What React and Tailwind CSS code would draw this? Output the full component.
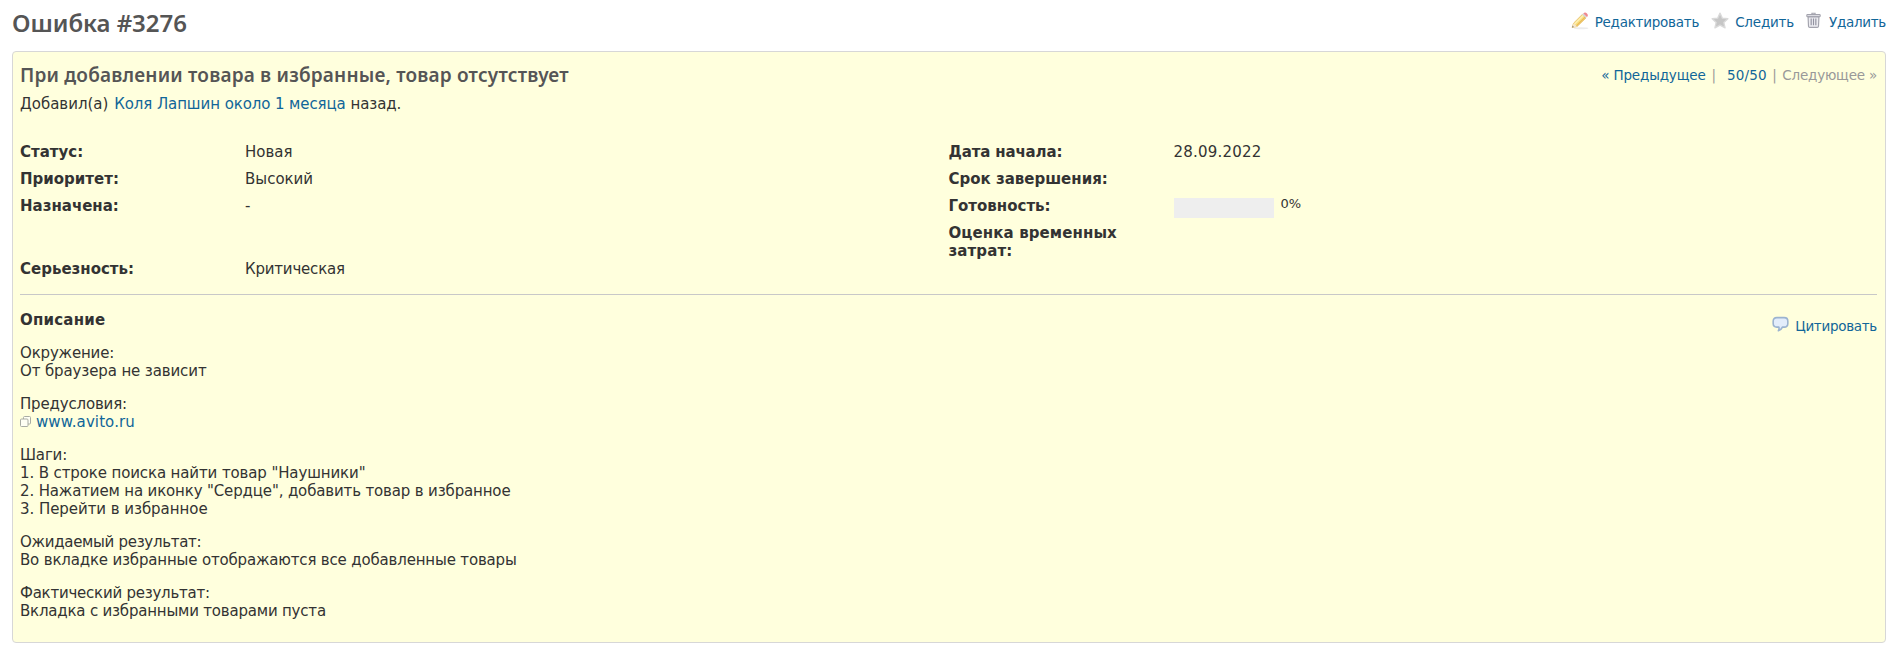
import React from "react";

function Pencil() {
  return (
    <svg width="18" height="18" viewBox="0 0 16 16" className="shrink-0">
      <ellipse cx="9" cy="14.4" rx="6.5" ry="0.9" fill="#ececec" />
      <path d="M1 13.800 2.300 9.900 10 2.200 13.300 5.300 5.400 12.900Z" fill="#f9dc7c" stroke="#e3b860" strokeWidth="0.7" />
      <path d="M3.200 10.700 11 3" stroke="#fdf0b4" strokeWidth="1.3" />
      <path d="M4.800 12.300 12.600 4.600" stroke="#e8b855" strokeWidth="0.9" />
      <path d="M10 2.200 13.300 5.300 14.200 4.300 11 1.200Z" fill="#d3d8dc" />
      <path d="M11 1.300c.9-1.200 2.100-1.100 3.200 0s1.100 2.200 0 3.200Z" fill="#ef8a90" />
      <path d="M1 13.800 2.300 9.900 5.400 12.900Z" fill="#f4e6cf" />
      <path d="M1 13.800 1.500 12.300 2.500 13.300Z" fill="#6b6b6b" />
    </svg>
  );
}

function Star() {
  return (
    <svg width="18" height="18" viewBox="0 0 16 16" className="shrink-0">
      <path
        d="M8 1 10.100 5.500 15 6 11.400 9.300 12.500 14.100 8 11.600 3.500 14.100 4.600 9.300 1 6 5.900 5.500Z"
        fill="#c6c6c6"
        stroke="#dadada"
        strokeWidth="1.2"
        strokeLinejoin="round"
      />
    </svg>
  );
}

function Trash() {
  return (
    <svg width="17" height="17" viewBox="0 0 16 16" fill="none" stroke="#a3a3ad" className="shrink-0">
      <path d="M6.500 2.200V1.100h3v1.100" strokeWidth="1" />
      <rect x="1.700" y="2.400" width="12.600" height="2.100" rx="0.700" fill="#dcdce2" strokeWidth="1" />
      <path d="M2.900 4.600 3.300 13.400q.1 1.100 1.200 1.100h7q1.100 0 1.200-1.100L13.100 4.600Z" fill="#ededf2" strokeWidth="1.100" />
      <path d="M5.800 6v6.500M8 6v6.500M10.200 6v6.500" strokeWidth="1.100" stroke="#9292a0" />
    </svg>
  );
}

function Bubble() {
  return (
    <svg width="17" height="17" viewBox="0 0 16 16" className="shrink-0">
      <path
        d="M4.500 1.500h7q3.400 0 3.400 3.400v2.200q0 3.400-3.400 3.400H9.800Q8.800 13 6 13.800 7 12 6.500 10.500h-2q-3.400 0-3.400-3.400V4.900q0-3.400 3.400-3.400Z"
        fill="#e3edfb"
        stroke="#9bb3d0"
        strokeWidth="1.500"
        strokeLinejoin="round"
      />
    </svg>
  );
}

function External() {
  return (
    <svg width="12" height="12" viewBox="0 0 12 12" fill="#fffff4" stroke="#a9aca4" className="shrink-0">
      <rect x="3.500" y="0.500" width="7" height="7.500" rx="1" />
      <rect x="0.500" y="3" width="7.500" height="7.500" rx="1" />
    </svg>
  );
}

function Action({ icon, children, className = "" }) {
  return (
    <a className={`flex h-5 items-center gap-[6px] text-[#169] ${className}`}>
      <span className="-mt-[3px]">{icon}</span>
      <span>{children}</span>
    </a>
  );
}

function Row({ label, children, className = "h-[27px]", valueClass = "" }) {
  return (
    <div className={`flex ${className}`}>
      <div className="w-[225px] shrink-0 pr-10 font-bold">{label}</div>
      <div className={valueClass}>{children}</div>
    </div>
  );
}

const Line = ({ children, className = "tracking-[-0.17px]" }) => <div className={className}>{children}</div>;

export default function App() {
  return (
    <div className="h-[648px] overflow-hidden bg-white px-3 font-['DejaVu_Sans',Verdana,sans-serif] text-[15px] leading-[18px] whitespace-nowrap text-[#333]">
      <header className="flex h-[51px] justify-between">
        <h2 className="pt-[8px] font-['Noto_Sans','Open_Sans',sans-serif] text-[24px] leading-[30px] font-semibold tracking-[-0.05px] text-[#555]">
          Ошибка #3276
        </h2>
        <div className="flex pt-[12px] text-[13.5px] leading-5">
          <Action icon={<Pencil />} className="mr-[12px] tracking-[-0.25px]">Редактировать</Action>
          <Action icon={<Star />} className="mr-[11px] tracking-[-0.2px]">Следить</Action>
          <Action icon={<Trash />} className="gap-[7px] tracking-[-0.3px]">Удалить</Action>
        </div>
      </header>

      <main className="h-[592px] rounded-[4px] border border-[#d7d7d7] bg-[#ffffdd] pr-[8px] pl-[7px]">
        <div className="flex h-[43px] justify-between pt-[11px]">
          <h3 className="font-['Noto_Sans','Open_Sans',sans-serif] text-[19px] leading-[25px] font-semibold tracking-[0.19px] text-[#555]">
            При добавлении товара в избранные, товар отсутствует
          </h3>
          <div className="pt-[3px] text-[13.5px] tracking-[-0.15px] text-[#999]">
            <a className="text-[#169]">« Предыдущее</a>
            <span className="mr-[11px] ml-[6px]">|</span>
            <a className="tracking-[0.2px] text-[#169]">50/50</a>
            <span className="mx-[5.500px]">|</span>
            <span className="tracking-[-0.2px]">Следующее »</span>
          </div>
        </div>
        <p className="h-[48px]">
          Добавил(а) <a className="ml-px tracking-[-0.1px] text-[#169]">Коля Лапшин</a>{" "}
          <a className="tracking-[-0.1px] text-[#169]">около 1 месяца</a> <span className="tracking-[-0.1px]">назад.</span>
        </p>

        <section className="flex h-[152px] border-b border-[#c8c8c8]">
          <div className="w-1/2">
            <Row label="Статус:">Новая</Row>
            <Row label="Приоритет:">Высокий</Row>
            <Row label="Назначена:" className="h-[63px]">-</Row>
            <Row label="Серьезность:" valueClass="tracking-[-0.2px]">Критическая</Row>
          </div>
          <div className="w-1/2">
            <Row label={<span className="tracking-[-0.15px]">Дата начала:</span>} valueClass="tracking-[0.2px]">28.09.2022</Row>
            <Row label="Срок завершения:" />
            <Row label="Готовность:">
              <div className="flex gap-[7px] pt-px">
                <div className="h-5 w-[100px] bg-[#eee]" />
                <span className="-mt-px text-[13px] leading-[14px]">0%</span>
              </div>
            </Row>
            <Row label={<span className="tracking-[0.1px]">Оценка временных<br />затрат:</span>} />
          </div>
        </section>

        <div className="flex h-[49px] justify-between">
          <h4 className="pt-[16px] font-bold tracking-[0.2px]">Описание</h4>
          <Action icon={<Bubble />} className="mt-[21px] text-[13.5px] tracking-[-0.3px]">Цитировать</Action>
        </div>

        <article className="flex flex-col gap-[15px]">
          <div>
            <Line>Окружение:</Line>
            <Line className="tracking-[-0.12px]">От браузера не зависит</Line>
          </div>
          <div>
            <Line>Предусловия:</Line>
            <div className="flex items-center gap-[4px] text-[#169]">
              <External />
              <a className="tracking-[0.1px]">www.avito.ru</a>
            </div>
          </div>
          <div>
            <Line>Шаги:</Line>
            <Line className="tracking-[-0.12px]">1. В строке поиска найти товар "Наушники"</Line>
            <Line className="tracking-[-0.15px]">2. Нажатием на иконку "Сердце", добавить товар в избранное</Line>
            <Line className="tracking-[-0.05px]">3. Перейти в избранное</Line>
          </div>
          <div>
            <Line className="tracking-[-0.3px]">Ожидаемый результат:</Line>
            <Line>Во вкладке избранные отображаются все добавленные товары</Line>
          </div>
          <div>
            <Line className="tracking-[-0.24px]">Фактический результат:</Line>
            <Line className="tracking-[-0.2px]">Вкладка с избранными товарами пуста</Line>
          </div>
        </article>
      </main>
    </div>
  );
}
